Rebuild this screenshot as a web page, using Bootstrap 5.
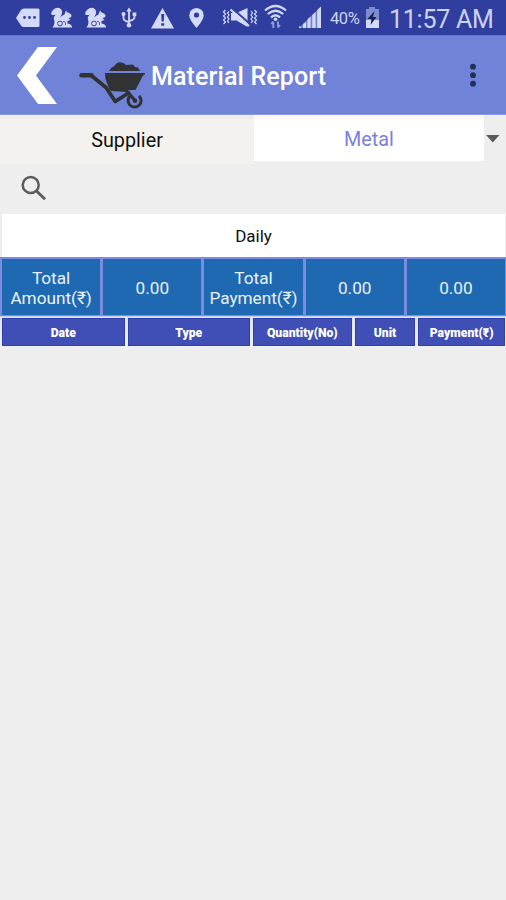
<!DOCTYPE html>
<html lang="en">
<head>
<meta charset="utf-8">
<meta name="viewport" content="width=device-width, initial-scale=1">
<title>Material Report</title>
<link href="https://cdn.jsdelivr.net/npm/bootstrap@5.3.0/dist/css/bootstrap.min.css" rel="stylesheet">
<style>
body{background:#eee;font-family:Roboto,"Noto Sans","DejaVu Sans",sans-serif;color:#111;min-height:900px}
svg{display:block;flex:none}
.status-bar{height:35px;background:#303f9f;color:#ccd3f4;line-height:1}
.status-bar svg{height:35px;fill:#d3dafa}
.battery-text{font-size:16.5px;width:32px;padding-top:3px;letter-spacing:-.4px}
.clock{font-size:25px;margin-left:7px;padding-top:4px;letter-spacing:-.25px}
.app-bar{height:80px;background:#7083d8;border-top:1px solid #6577cc;border-bottom:1px solid #8b9ae0}
.app-title{font-size:25px;font-weight:500;line-height:1;width:305px;padding-top:2px;letter-spacing:.12px}
.filters{height:49px}
.supplier{width:254px;background:#f3f2ee;border-top:4px solid #eeece8;font-size:19.8px;padding-bottom:2px}
.metal{width:230px;height:46px;background:#fff;border-top:4px solid #f9f9f8;color:#7b7ee0;font-size:19.8px}
.search-row{height:50px}
.period{height:43px;margin:0 1px 0 2px;padding-top:2px;background:#fff;font-size:17px}
.totals{height:60px;padding:2px 1px 1px 2px;gap:3px;background:#7c8be0;border-bottom:1px solid #c5cdf2}
.totals>div{flex:1 1 0;padding-top:1px;background:#1f69b2;color:#e9f2fb;font-size:17.2px;line-height:20px;text-align:center}
.heads{height:30px;padding:1px 1px 0 2px;gap:3px;background:linear-gradient(#dfe3f7,#eef0fa)}
.heads>div{height:28px;padding-top:2px;background:#3f4fb5;border:1px solid #2f3ea8;color:#fff;font-size:12.2px;font-weight:900;line-height:1}
.w-date{width:123px}.w-qty{width:99px}.w-unit{width:61px}.w-pay{width:87px}
</style>
</head>
<body>
<header>
<div class="status-bar d-flex align-items-center overflow-hidden">
<svg width="46" viewBox="0 0 46 35"><path d="M16 18l5-8q1-1.500 3-1.500h14q1.500 0 1.500 1.500v15.500q0 1.500-1.500 1.500H24q-2 0-3-1.500z"/><g fill="#303f9f"><circle cx="24.500" cy="17.500" r="1.400"/><circle cx="29.500" cy="17.500" r="1.400"/><circle cx="34.500" cy="17.500" r="1.400"/></g></svg>
<svg width="34" viewBox="46 0 34 35"><g id="squirrel"><path d="M52.500 27.500C54.500 25 55 22 54 19.500Q53 17 56 14.500Q54 15.500 51.200 14.500Q51 11.500 53.500 9.500Q56 7 59.300 8Q62.800 9.500 62 13.500Q61 16 60 17.500Q62 15.500 64.500 14.500L66 10.500L67.500 12.500Q71 13 71.700 16Q71 18 68.500 18L70.500 20L67.500 21L67.500 23.500Q72 24 72 27.500Z"/><circle cx="60" cy="23.500" r="2.400" fill="none" stroke="#303f9f" stroke-width="1"/><path d="M63 21.500q2-.500 2.500 1.500v2" fill="none" stroke="#303f9f" stroke-width=".8"/></g></svg>
<svg width="34" viewBox="46 0 34 35"><use href="#squirrel"/></svg>
<svg width="32" viewBox="114 0 32 35"><path d="M129 10v14M123.500 14v4q0 3 5.500 4M134.500 14v3q0 3-5.500 4" fill="none" stroke="#d3dafa" stroke-width="1.800"/><path d="M129 7.500l-2.700 4h5.400zM132.700 12.500h3.600v3.500h-3.600z"/><circle cx="123.500" cy="14" r="2"/><circle cx="129" cy="25.300" r="2.300"/></svg>
<svg width="36" viewBox="146 0 36 35"><path d="M162.500 8L174 28.500h-23z"/><path d="M161.200 14h3l-.400 7.500h-2.200zM161.200 23.200h3v2.600h-3z" fill="#303f9f"/></svg>
<svg width="38" viewBox="182 0 38 35"><path d="M196.500 8q7.200.500 7.200 7.500 0 4-7.200 12.500-7.200-8.500-7.200-12.500 0-7 7.200-7.500z"/><circle cx="196.500" cy="15" r="2.600" fill="#303f9f"/></svg>
<svg width="40" viewBox="220 0 40 35"><path d="M231 13h5.500l11-5v19l-11-6.500H231z"/><path d="M232 8l19 17" stroke="#303f9f" stroke-width="2"/><path d="M230.500 9.500l18.500 16.500" stroke="#d3dafa" stroke-width="2"/><path d="M225.500 10l-2 2 2 2-2 2 2 2-2 2 2 2-2 2M229 11.500l-1.500 1.500 1.500 2-1.500 2 1.500 2-1.500 2 1.500 2M251 11l1.500 2-1.500 2 1.500 2-1.500 2 1.500 2-1.500 2M254.500 10l2 2-2 2 2 2-2 2 2 2-2 2 2 2" fill="none" stroke="#d3dafa" stroke-width="1.200"/></svg>
<svg width="34" viewBox="260 0 34 35"><path d="M265 10.500q10.500-9 21 0M267.800 14q7.700-6.500 15.400 0M271 17.300q4.500-3.800 9 0" fill="none" stroke="#d3dafa" stroke-width="2.200"/><circle cx="275.500" cy="19.200" r="1.800"/><path d="M273.300 28v-6m-2 2l2-2.500M278 21.500v6m0 0l2-2.500" fill="none" stroke="#8d9bd8" stroke-width="2"/></svg>
<svg width="36" viewBox="294 0 36 35"><path d="M299 28l22-21.500V28z" fill="#7684c9"/><path d="M299 26.500h2V28h-2zM303 24l3-2v6h-3zM307.500 19.500l3-3V28h-3zM312.300 15l3.200-3V28h-3.200zM317.300 10l3.700-3.500V28h-3.700z"/></svg>
<span class="battery-text">40%</span>
<svg width="20" viewBox="361 0 20 35"><path d="M368 7h6v2h4v19h-13V9h3z" fill="#7e8bcc"/><path d="M365 20h13v8h-13z"/><path d="M373.500 11l-7 8h4l-1 6 6-8H372z" fill="#172250"/></svg>
<time class="clock text-nowrap">11:57 AM</time>
</div>
<nav class="app-bar d-flex align-items-center" aria-label="Material report">
<svg width="78" height="78" viewBox="0 36 78 78"><path d="M38 47h19L36 75.500 57 104H38L17 75.500z" fill="#fff"/></svg>
<svg width="73" height="78" viewBox="78 36 73 78"><g fill="#303233"><path d="M105 73h40q0 2-2 2.500l-7.500 14.500h-26l-4-11z"/><path d="M109 71q2-4 5-4.500 2-4 6-4.200 4 .200 6 2.700l7-.500 2 2.500 3 .500 2 3.500z"/></g><path d="M91 75.200L106 87.500l9.300 14L130 92M111 89l17 1" fill="none" stroke="#303233" stroke-width="3.800" stroke-linejoin="round"/><path d="M81.500 75.200h10" stroke="#303233" stroke-width="4.500" stroke-linecap="round"/><path d="M130.500 95.500a6.500 6.500 0 1 0 8.500.300" fill="none" stroke="#303233" stroke-width="3"/><path d="M125 89l10 11.500" stroke="#303233" stroke-width="3.200"/><circle cx="135" cy="100.700" r="2.300" fill="#303233"/></svg>
<h1 class="app-title text-white mb-0">Material Report</h1>
<svg width="34" height="78" viewBox="456 36 34 78" fill="#202d58"><circle cx="473" cy="66.700" r="2.900"/><circle cx="473" cy="75.200" r="2.900"/><circle cx="473" cy="83.700" r="2.900"/></svg>
</nav>
</header>
<main>
<div class="filters d-flex">
<div class="supplier d-flex align-items-center justify-content-center">Supplier</div>
<div class="metal d-flex align-items-center justify-content-center">Metal</div>
<svg width="22" height="46" viewBox="484 115 22 46"><path d="M486 135h13.500l-6.700 7.500z" fill="#5b5b5b"/></svg>
</div>
<div class="search-row"><svg width="60" height="50" viewBox="0 164 60 50" fill="none" stroke="#5c5c5c"><circle cx="30.700" cy="185" r="8" stroke-width="2.500"/><path d="M36.500 191l8.500 8.300" stroke-width="3"/></svg></div>
<div class="period d-flex align-items-center justify-content-center">Daily</div>
<section class="totals d-flex">
<div class="d-flex align-items-center justify-content-center">Total<br>Amount(₹)</div>
<div class="d-flex align-items-center justify-content-center">0.00</div>
<div class="d-flex align-items-center justify-content-center">Total<br>Payment(₹)</div>
<div class="d-flex align-items-center justify-content-center">0.00</div>
<div class="d-flex align-items-center justify-content-center">0.00</div>
</section>
<section class="heads d-flex">
<div class="w-date d-flex align-items-center justify-content-center">Date</div>
<div class="w-date d-flex align-items-center justify-content-center">Type</div>
<div class="w-qty d-flex align-items-center justify-content-center">Quantity(No)</div>
<div class="w-unit d-flex align-items-center justify-content-center">Unit</div>
<div class="w-pay d-flex align-items-center justify-content-center">Payment(₹)</div>
</section>
</main>
<script src="https://cdn.jsdelivr.net/npm/bootstrap@5.3.0/dist/js/bootstrap.bundle.min.js"></script>
</body>
</html>
